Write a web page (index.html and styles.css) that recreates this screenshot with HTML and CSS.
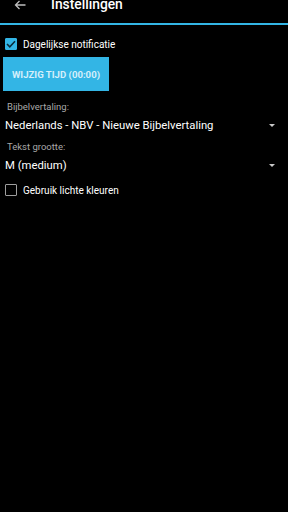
FILE: index.html
```html
<!DOCTYPE html>
<html lang="nl">
<head>
  <meta charset="UTF-8">
  <meta name="viewport" content="width=device-width, initial-scale=1.0">
  <title>Instellingen</title>
  <link rel="stylesheet" href="styles.css">
</head>
<body>
  <!-- Action bar -->
  <div class="action-bar">
    <svg class="back" width="12" height="10" viewBox="0 0 12 10">
      <path d="M11.5 5H1.5M5.5 1L1.5 5l4 4" fill="none" stroke="#bdbdbd" stroke-width="1.3"/>
    </svg>
    <span class="title">Instellingen</span>
  </div>

  <div class="settings">
    <label class="check-row">
      <span class="box checked">
        <svg width="10" height="8" viewBox="0 0 10 8"><path d="M1 4l2.8 2.8L9 1.2" fill="none" stroke="#0a2a38" stroke-width="1.5"/></svg>
      </span>
      Dagelijkse notificatie
    </label>

    <button class="time-button">WIJZIG TIJD (00:00)</button>

    <div class="field first">
      <div class="field-label">Bijbelvertaling:</div>
      <div class="spinner">
        <span>Nederlands - NBV - Nieuwe Bijbelvertaling</span>
        <span class="caret"></span>
      </div>
    </div>

    <div class="field">
      <div class="field-label">Tekst grootte:</div>
      <div class="spinner">
        <span>M (medium)</span>
        <span class="caret"></span>
      </div>
    </div>

    <label class="check-row light">
      <span class="box"></span>
      Gebruik lichte kleuren
    </label>
  </div>
</body>
</html>
```

FILE: styles.css
```css
body {
  margin: 0;
  background: #000;
  color: #fff;
  font-family: Roboto, 'Noto Sans', sans-serif;
  width: 288px;
  height: 512px;
  overflow: hidden;
}

.action-bar {
  height: 23px;
  display: flex;
  align-items: flex-start;
  border-bottom: 2px solid #33b5e5;
}

.back {
  margin: 0 0 0 14px;
}

.title {
  margin-left: 25px;
  margin-top: -4px;
  font-size: 13.8px;
  font-weight: 500;
  line-height: 17px;
}

.settings {
  padding: 13px 0 0 5px;
}

.check-row {
  display: flex;
  align-items: center;
  gap: 6px;
  font-size: 10px;
  height: 12px;
}

.box {
  width: 10px;
  height: 10px;
  border: 1px solid #9e9e9e;
  border-radius: 1px;
  display: flex;
  align-items: center;
  justify-content: center;
}

.box.checked {
  background: #33b5e5;
  border-color: #33b5e5;
}

.time-button {
  display: block;
  margin: 7px 0 0 -2px;
  width: 106px;
  height: 34px;
  padding: 0;
  border: none;
  background: #33b5e5;
  color: #d4effb;
  font-family: inherit;
  font-size: 9.6px;
  font-weight: 700;
}

.field {
  margin-top: 4px;
}

.field.first {
  margin-top: 10px;
}

.field-label {
  color: #a8a8a8;
  font-size: 9.5px;
  padding-left: 2px;
  line-height: 12px;
}

.spinner {
  display: flex;
  align-items: center;
  justify-content: space-between;
  font-size: 11.3px;
  height: 24px;
  padding-right: 13px;
}

.caret {
  width: 0;
  height: 0;
  border-left: 3.5px solid transparent;
  border-right: 3.5px solid transparent;
  border-top: 3.5px solid #c8c8c8;
}

.check-row.light {
  margin-top: 7px;
}
```
